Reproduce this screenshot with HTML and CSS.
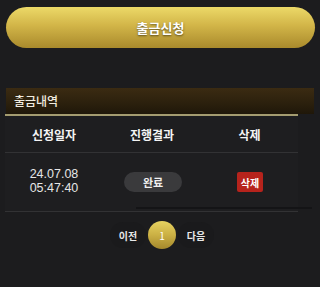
FILE: index.html
```html
<!DOCTYPE html>
<html lang="ko">
<head>
<meta charset="utf-8">
<link rel="stylesheet" href="styles.css">
</head>
<body>
<div class="page">
  <button class="apply">출금신청</button>
  <div class="section-title">출금내역</div>
  <div class="table-wrap">
    <div class="row head">
      <div class="cell">신청일자</div>
      <div class="cell">진행결과</div>
      <div class="cell">삭제</div>
    </div>
    <div class="row body">
      <div class="cell date"><span>24.07.08</span><span>05:47:40</span></div>
      <div class="cell"><span class="status">완료</span></div>
      <div class="cell"><span class="del">삭제</span></div>
    </div>
    <div class="scrollbar"></div>
  </div>
  <div class="pager">
    <span class="pg-btn">이전</span>
    <span class="pg-num">1</span>
    <span class="pg-btn">다음</span>
  </div>
</div>
</body>
</html>
```
FILE: styles.css
```css
* { box-sizing: border-box; }
html, body { margin: 0; padding: 0; background: #1c1c1e; }
body {
  font-family: "Noto Sans CJK KR", "Noto Sans", sans-serif;
  color: #fff;
  width: 320px;
  height: 287px;
  overflow: hidden;
}
.page { padding: 7px 6px 0 6px; }
.apply {
  display: block;
  width: 309px;
  height: 41px;
  border: none;
  border-radius: 21px;
  background: linear-gradient(180deg, #ecd968 0%, #d2b548 45%, #a98a2c 100%);
  color: #fff;
  font-family: inherit;
  font-size: 13px;
  font-weight: 700;
  text-shadow: 0 1px 2px rgba(0,0,0,0.55);
  padding: 0;
}
.section-title {
  margin-top: 40px;
  height: 26px;
  width: 308px;
  background: linear-gradient(180deg, #3b2b12 0%, #2b200d 60%, #1f1709 100%);
  font-size: 12px;
  font-weight: 500;
  color: #f2ede0;
  padding-left: 8px;
  line-height: 26px;
}
.table-wrap {
  position: relative;
  width: 293px;
  margin-left: -1px;
  border-top: 2px solid #a49c70;
  background: #1e1e20;
}
.row {
  display: grid;
  grid-template-columns: 98px 98px 97px;
  border-bottom: 1px solid #323234;
}
.row.head { height: 37px; }
.row.body { height: 59px; }
.cell {
  display: flex;
  align-items: center;
  justify-content: center;
}
.head .cell {
  font-size: 12px;
  font-weight: 700;
  color: #f4f4f4;
}
.date {
  flex-direction: column;
  font-family: "Liberation Sans", Arial, sans-serif;
  font-size: 12.5px;
  line-height: 14px;
  color: #e6e6e6;
  padding-bottom: 2px;
}
.status {
  display: inline-flex;
  align-items: center;
  justify-content: center;
  width: 58px;
  height: 20px;
  border-radius: 10px;
  background: #3a3a3c;
  font-size: 11px;
  font-weight: 700;
  color: #f0f0f0;
  margin-left: 2px;
}
.del {
  display: inline-flex;
  align-items: center;
  justify-content: center;
  width: 26px;
  height: 20px;
  border-radius: 2px;
  background: #b6231c;
  font-size: 10px;
  font-weight: 700;
  color: #fff;
  margin-left: 1px;
}
.scrollbar {
  position: absolute;
  left: 131px;
  right: -14px;
  bottom: 3px;
  height: 2px;
  background: #141416;
}
.pager {
  display: flex;
  justify-content: center;
  align-items: center;
  margin-top: 9px;
  margin-left: 4px;
}
.pg-btn {
  display: inline-flex;
  align-items: center;
  justify-content: center;
  width: 36px;
  height: 26px;
  border-radius: 13px;
  background: #1a1a1c;
  font-size: 10px;
  font-weight: 700;
  color: #e8e8e8;
}
.pg-num {
  display: inline-flex;
  align-items: center;
  justify-content: center;
  width: 28px;
  height: 28px;
  border-radius: 50%;
  background: linear-gradient(180deg, #e6d260 0%, #cbb044 50%, #a4882c 100%);
  font-size: 10px;
  font-weight: 400;
  color: #fff;
  margin: 0 2px;
}
```
